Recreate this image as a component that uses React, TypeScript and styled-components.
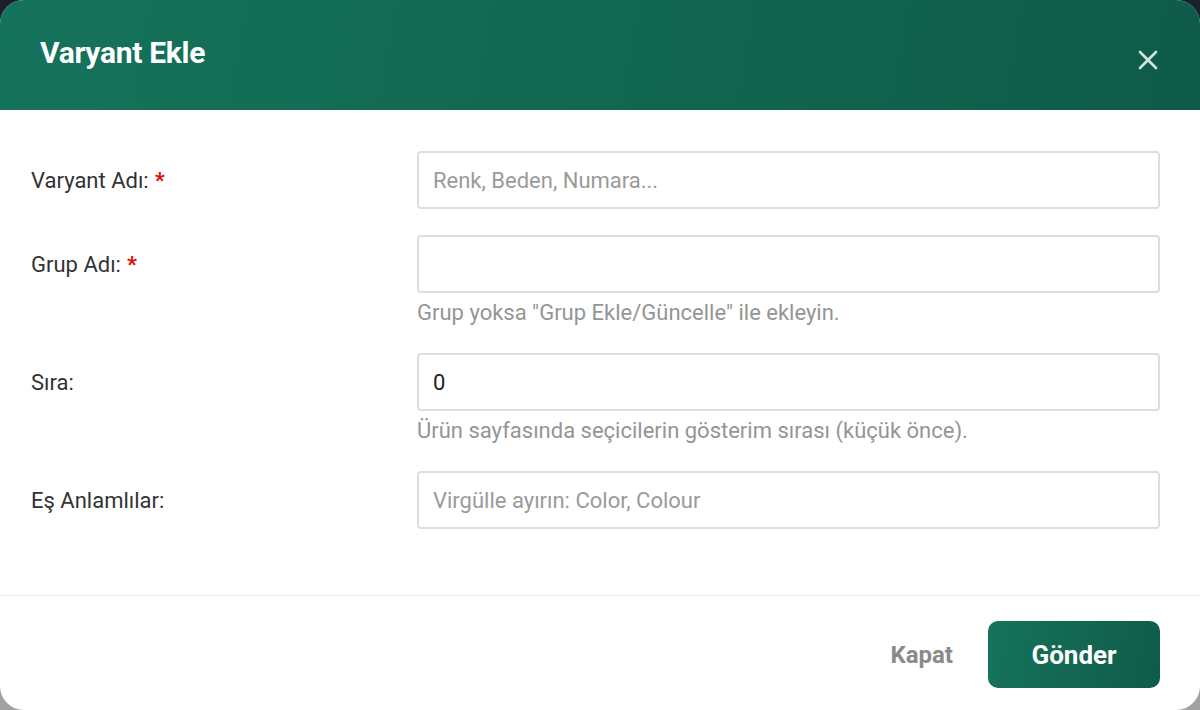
import styled, { createGlobalStyle } from 'styled-components';

const GlobalStyle = createGlobalStyle`
  html, body {
    margin: 0;
    padding: 0;
    height: 100%;
  }
  body {
    background: linear-gradient(180deg, #1b1e2b 0%, #4a4d57 50%, #a3a3a3 100%);
    font-family: Roboto, "Noto Sans", "Liberation Sans", sans-serif;
  }
  * {
    box-sizing: border-box;
  }
`;

const Modal = styled.div`
  width: 1200px;
  height: 710px;
  background: #fff;
  border-radius: 24px;
  overflow: hidden;
  display: flex;
  flex-direction: column;
`;

const Header = styled.div`
  height: 110px;
  flex-shrink: 0;
  display: flex;
  align-items: flex-start;
  justify-content: space-between;
  padding: 33px 40px 0 40px;
  background: linear-gradient(100deg, #16735b 0%, #11664f 55%, #0f5b4a 100%);
`;

const Title = styled.h2`
  margin: 0;
  color: #fff;
  font-size: 30px;
  line-height: 40px;
  font-weight: 700;
  letter-spacing: -0.3px;
`;

const CloseButton = styled.button`
  border: 0;
  background: transparent;
  padding: 0;
  margin-top: 15px;
  width: 24px;
  height: 24px;
  display: flex;
  align-items: center;
  justify-content: center;
  cursor: pointer;
`;

const Body = styled.div`
  flex: 1;
  padding: 41px 40px 0 31px;
  display: flex;
  flex-direction: column;
  gap: 26px;
`;

const Row = styled.div`
  display: grid;
  grid-template-columns: 386px 1fr;
  align-items: start;
`;

const Label = styled.label`
  height: 58px;
  display: flex;
  align-items: center;
  gap: 6px;
  font-size: 22px;
  color: #333;
`;

const Required = styled.span`
  color: #e20a0a;
  font-weight: 700;
`;

const Field = styled.div`
  display: flex;
  flex-direction: column;
`;

const Input = styled.input`
  width: 100%;
  height: 58px;
  border: 2px solid #dedede;
  border-radius: 4px;
  padding: 0 14px;
  font-family: inherit;
  font-size: 22px;
  color: #222;
  outline: none;

  &::placeholder {
    color: #9a9a9a;
  }
`;

const Help = styled.div`
  margin-top: 6px;
  font-size: 22px;
  line-height: 28px;
  color: #959595;
`;

const Footer = styled.div`
  height: 115px;
  flex-shrink: 0;
  border-top: 1px solid #ececec;
  display: flex;
  align-items: flex-start;
  justify-content: flex-end;
  gap: 35px;
  padding: 25px 40px 0 0;
`;

const TextButton = styled.button`
  border: 0;
  background: transparent;
  height: 67px;
  padding: 0;
  font-family: inherit;
  font-size: 24px;
  font-weight: 700;
  color: #8a8a8a;
  cursor: pointer;
`;

const PrimaryButton = styled.button`
  border: 0;
  width: 172px;
  height: 67px;
  border-radius: 10px;
  background: linear-gradient(100deg, #16735b 0%, #0f5b4a 100%);
  font-family: inherit;
  font-size: 26px;
  font-weight: 700;
  color: #fff;
  cursor: pointer;
`;

function CloseIcon() {
  return (
    <svg width="20" height="20" viewBox="0 0 20 20" fill="none">
      <path
        d="M2 2L18 18M18 2L2 18"
        stroke="#cfe7de"
        strokeWidth="2.6"
        strokeLinecap="round"
      />
    </svg>
  );
}

export default function App() {
  return (
    <>
      <GlobalStyle />
      <Modal>
        <Header>
          <Title>Varyant Ekle</Title>
          <CloseButton aria-label="Kapat">
            <CloseIcon />
          </CloseButton>
        </Header>
        <Body>
          <Row>
            <Label>
              Varyant Adı: <Required>*</Required>
            </Label>
            <Field>
              <Input placeholder="Renk, Beden, Numara..." />
            </Field>
          </Row>
          <Row>
            <Label>
              Grup Adı: <Required>*</Required>
            </Label>
            <Field>
              <Input />
              <Help>Grup yoksa "Grup Ekle/Güncelle" ile ekleyin.</Help>
            </Field>
          </Row>
          <Row>
            <Label>Sıra:</Label>
            <Field>
              <Input defaultValue="0" />
              <Help>Ürün sayfasında seçicilerin gösterim sırası (küçük önce).</Help>
            </Field>
          </Row>
          <Row>
            <Label>Eş Anlamlılar:</Label>
            <Field>
              <Input placeholder="Virgülle ayırın: Color, Colour" />
            </Field>
          </Row>
        </Body>
        <Footer>
          <TextButton>Kapat</TextButton>
          <PrimaryButton>Gönder</PrimaryButton>
        </Footer>
      </Modal>
    </>
  );
}
